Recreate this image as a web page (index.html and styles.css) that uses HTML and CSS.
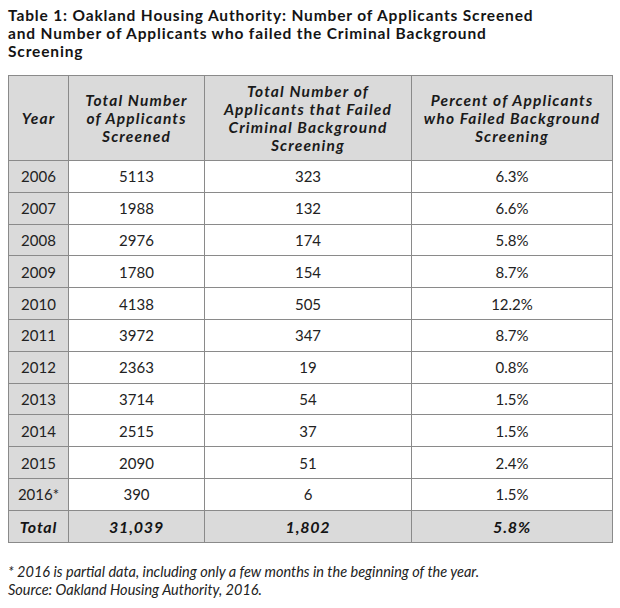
FILE: index.html
```html
<!DOCTYPE html>
<html>
<head>
<meta charset="utf-8">
<link rel="stylesheet" href="styles.css">
</head>
<body>
<div class="page">
  <h1 class="title">Table 1: Oakland Housing Authority: Number of Applicants Screened<br>and Number of Applicants who failed the Criminal Background<br>Screening</h1>
  <table class="data">
    <colgroup>
      <col class="c-year"><col class="c-screened"><col class="c-failed"><col class="c-pct">
    </colgroup>
    <thead>
      <tr>
        <th>Year</th>
        <th>Total Number<br>of Applicants<br>Screened</th>
        <th>Total Number of<br>Applicants that Failed<br>Criminal Background<br>Screening</th>
        <th>Percent of Applicants<br>who Failed Background<br>Screening</th>
      </tr>
    </thead>
    <tbody>
      <tr><td class="yr">2006</td><td>5113</td><td>323</td><td>6.3%</td></tr>
      <tr><td class="yr">2007</td><td>1988</td><td>132</td><td>6.6%</td></tr>
      <tr><td class="yr">2008</td><td>2976</td><td>174</td><td>5.8%</td></tr>
      <tr><td class="yr">2009</td><td>1780</td><td>154</td><td>8.7%</td></tr>
      <tr><td class="yr">2010</td><td>4138</td><td>505</td><td>12.2%</td></tr>
      <tr><td class="yr">2011</td><td>3972</td><td>347</td><td>8.7%</td></tr>
      <tr><td class="yr">2012</td><td>2363</td><td>19</td><td>0.8%</td></tr>
      <tr><td class="yr">2013</td><td>3714</td><td>54</td><td>1.5%</td></tr>
      <tr><td class="yr">2014</td><td>2515</td><td>37</td><td>1.5%</td></tr>
      <tr><td class="yr">2015</td><td>2090</td><td>51</td><td>2.4%</td></tr>
      <tr><td class="yr">2016*</td><td>390</td><td>6</td><td>1.5%</td></tr>
      <tr class="total"><td>Total</td><td>31,039</td><td>1,802</td><td>5.8%</td></tr>
    </tbody>
  </table>
  <p class="note">* 2016 is partial data, including only a few months in the beginning of the year.<br>Source: Oakland Housing Authority, 2016.</p>
</div>
</body>
</html>
```

FILE: styles.css
```css
html, body {
  margin: 0;
  padding: 0;
  background: #ffffff;
}
.page {
  padding: 6px 8px 0 8px;
  font-family: Lato, "Open Sans", sans-serif;
  color: #1e1e1e;
}
.title {
  margin: 0;
  font-size: 15.5px;
  line-height: 18px;
  font-weight: 700;
  letter-spacing: 0.85px;
  color: #141414;
  white-space: nowrap;
}
.data {
  margin-top: 15px;
  border-collapse: collapse;
  width: 604px;
  table-layout: fixed;
  font-size: 15px;
}
.c-year { width: 60px; }
.c-screened { width: 136px; }
.c-failed { width: 207px; }
.c-pct { width: 201px; }
.data th, .data td {
  border: 1px solid #8a8a8a;
  text-align: center;
  padding: 0;
}
.data th {
  background: #dadada;
  height: 84px;
  font-style: italic;
  font-weight: 700;
  font-size: 15.5px;
  line-height: 18px;
  letter-spacing: 1.15px;
  color: #1a1a1a;
  white-space: nowrap;
}
.data td {
  height: 30.8px;
  color: #222;
}
.data td.yr {
  background: #dadada;
}
.data tr.total td {
  background: #dadada;
  font-weight: 700;
  font-style: italic;
  font-size: 16px;
  letter-spacing: 0.8px;
  color: #141414;
}
.note {
  margin: 20px 0 0 0;
  font-style: italic;
  font-size: 14.5px;
  line-height: 18px;
  color: #222;
}
```
